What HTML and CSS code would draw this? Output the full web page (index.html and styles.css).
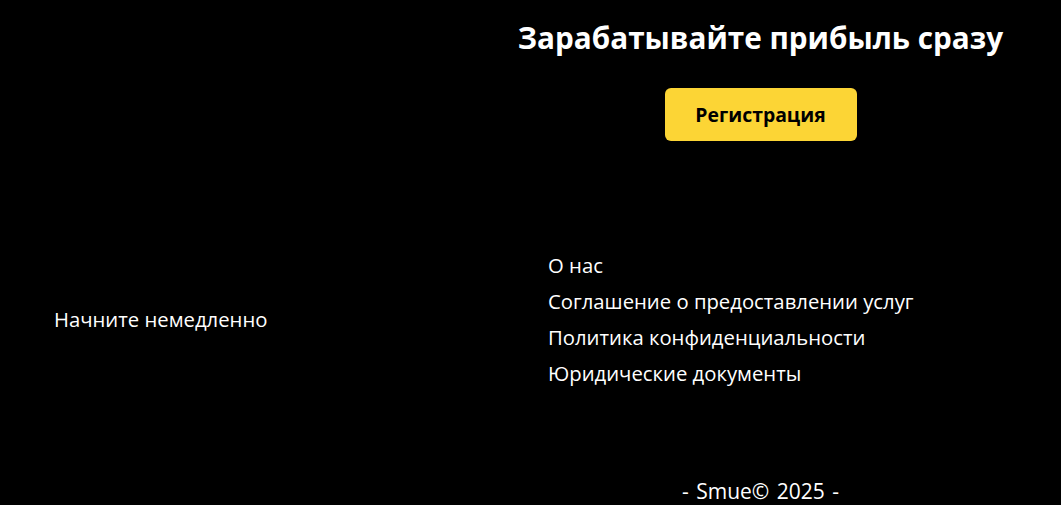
FILE: index.html
```html
<!DOCTYPE html>
<html lang="ru">
<head>
<meta charset="utf-8">
<title>Smue</title>
<link rel="stylesheet" href="styles.css">
</head>
<body>
<section class="hero">
  <h1 class="hero-title">Зарабатывайте прибыль сразу</h1>
  <a class="btn-register" href="#">Регистрация</a>
</section>
<section class="info">
  <div class="info-left">Начните немедленно</div>
  <ul class="info-links">
    <li><a href="#">О нас</a></li>
    <li><a href="#">Соглашение о предоставлении услуг</a></li>
    <li><a href="#">Политика конфиденциальности</a></li>
    <li><a href="#">Юридические документы</a></li>
  </ul>
</section>
<footer class="footer">- Smue© 2025 -</footer>
</body>
</html>
```

FILE: styles.css
```css
html, body {
  margin: 0;
  padding: 0;
  background: #000;
  color: #fff;
  font-family: "Open Sans", "Noto Sans", sans-serif;
  height: 505px;
  overflow: hidden;
}

.hero {
  margin-left: 460px;
  width: 601px;
  display: flex;
  flex-direction: column;
  align-items: center;
  padding-top: 17px;
}

.hero-title {
  margin: 0;
  font-size: 29.7px;
  font-weight: 700;
  line-height: 42px;
  white-space: nowrap;
}

.btn-register {
  margin-top: 29px;
  width: 192px;
  height: 53px;
  display: flex;
  align-items: center;
  justify-content: center;
  background: #fcd535;
  color: #000;
  border-radius: 6px;
  font-size: 19.4px;
  font-weight: 700;
  text-decoration: none;
}

.info {
  display: flex;
  align-items: center;
  margin-top: 106px;
}

.info-left {
  flex: 0 0 548px;
  padding-left: 54px;
  box-sizing: border-box;
  font-size: 20.3px;
  line-height: 36px;
}

.info-links {
  list-style: none;
  margin: 0;
  padding: 0;
}

.info-links li {
  font-size: 20.3px;
  line-height: 36px;
}

.info-links a {
  color: #fff;
  text-decoration: none;
}

.footer {
  margin-left: 460px;
  width: 601px;
  text-align: center;
  margin-top: 87px;
  font-size: 21px;
  line-height: 26px;
  word-spacing: 2px;
}
```
